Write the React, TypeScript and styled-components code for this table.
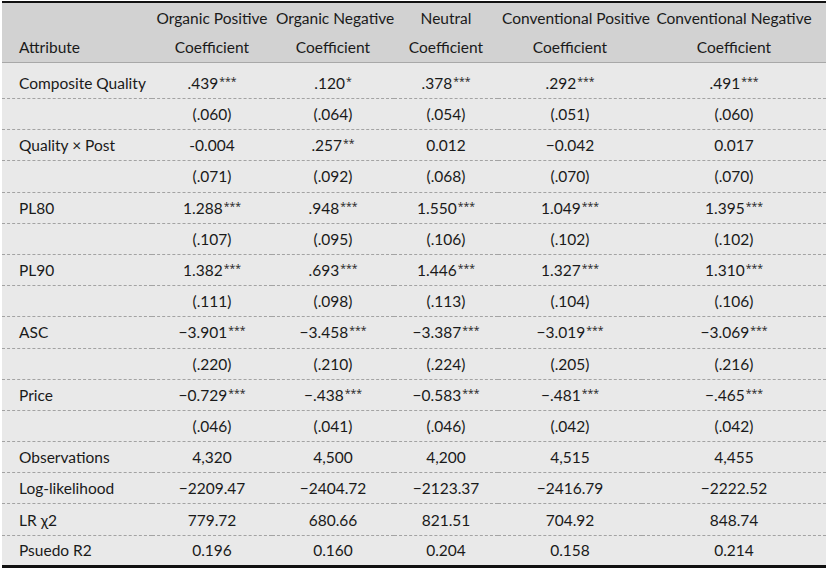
import React from "react";
import styled, {createGlobalStyle} from "styled-components";

const GlobalStyle = createGlobalStyle`
  html, body {
    margin: 0;
    padding: 0;
    background: #ffffff;
  }

  body {
    font-family: Lato, "Open Sans", "DejaVu Sans", sans-serif;
    color: #1a1a1a;
  }
`

const Page = styled.div`
  padding: 1px 5px 0 2px;
`

const Table = styled.table`
  width: 824px;
  border-collapse: collapse;
  table-layout: fixed;
  font-size: 15.5px;
  border-top: 2px solid #111;
  border-bottom: 3px solid #111;
  background: #e9e9e9;
`

const HeadRow = styled.tr`
  background: #d2d2d2;
  border-bottom: 1px solid #a8a8a8;
`

const HeadCell = styled.th<{ $left?: boolean }>`
  font-weight: 400;
  line-height: 29px;
  padding: 1px 4px 0 ${p => p.$left ? "17px" : "4px"};
  text-align: ${p => p.$left ? "left" : "center"};
  vertical-align: bottom;
  white-space: nowrap;
`

const BodyRow = styled.tr<{ $first?: boolean, $last?: boolean }>`
  height: ${p => p.$first ? "36px" : "31.2px"};
  border-bottom: ${p => p.$last ? "none" : "1px dashed #a3a3a3"};

  td {
    padding-top: ${p => p.$first ? "5px" : "0"};
  }
`

const LabelCell = styled.td`
  padding: 0 0 0 17px;
  white-space: nowrap;
`

const ValueCell = styled.td`
  text-align: center;
  padding: 0 4px;
  white-space: nowrap;
`

const Stars = styled.sup`
  font-family: "Open Sans", "DejaVu Sans", sans-serif;
  font-size: 10.5px;
  line-height: 0;
  vertical-align: 4px;
  margin-left: 1px;
`

const columns = [
    {top: "Organic Positive", width: 120},
    {top: "Organic Negative", width: 122},
    {top: "Neutral", width: 104},
    {top: "Conventional Positive", width: 144},
    {top: "Conventional Negative", width: 184},
]

type Row = { label: string, values: string[] }

const rows: Row[] = [
    {label: "Composite Quality", values: [".439***", ".120*", ".378***", ".292***", ".491***"]},
    {label: "", values: ["(.060)", "(.064)", "(.054)", "(.051)", "(.060)"]},
    {label: "Quality × Post", values: ["-0.004", ".257**", "0.012", "−0.042", "0.017"]},
    {label: "", values: ["(.071)", "(.092)", "(.068)", "(.070)", "(.070)"]},
    {label: "PL80", values: ["1.288***", ".948***", "1.550***", "1.049***", "1.395***"]},
    {label: "", values: ["(.107)", "(.095)", "(.106)", "(.102)", "(.102)"]},
    {label: "PL90", values: ["1.382***", ".693***", "1.446***", "1.327***", "1.310***"]},
    {label: "", values: ["(.111)", "(.098)", "(.113)", "(.104)", "(.106)"]},
    {label: "ASC", values: ["−3.901***", "−3.458***", "−3.387***", "−3.019***", "−3.069***"]},
    {label: "", values: ["(.220)", "(.210)", "(.224)", "(.205)", "(.216)"]},
    {label: "Price", values: ["−0.729***", "−.438***", "−0.583***", "−.481***", "−.465***"]},
    {label: "", values: ["(.046)", "(.041)", "(.046)", "(.042)", "(.042)"]},
    {label: "Observations", values: ["4,320", "4,500", "4,200", "4,515", "4,455"]},
    {label: "Log-likelihood", values: ["−2209.47", "−2404.72", "−2123.37", "−2416.79", "−2222.52"]},
    {label: "LR χ2", values: ["779.72", "680.66", "821.51", "704.92", "848.74"]},
    {label: "Psuedo R2", values: ["0.196", "0.160", "0.204", "0.158", "0.214"]},
]

const Value = ({text}: { text: string }) => {
    const m = text.match(/^(.*?)(\*+)$/)
    if (!m) return <>{text}</>
    return <>{m[1]}<Stars>{m[2]}</Stars></>
}

export default function App() {
    return <>
        <GlobalStyle/>
        <Page>
            <Table>
                <colgroup>
                    <col style={{width: 150}}/>
                    {columns.map(c => <col key={c.top} style={{width: c.width}}/>)}
                </colgroup>
                <thead>
                <HeadRow>
                    <HeadCell $left>Attribute</HeadCell>
                    {columns.map(c => <HeadCell key={c.top}>{c.top}<br/>Coefficient</HeadCell>)}
                </HeadRow>
                </thead>
                <tbody>
                {rows.map((r, i) => <BodyRow key={i} $first={i === 0} $last={i === rows.length - 1}>
                    <LabelCell>{r.label}</LabelCell>
                    {r.values.map((v, j) => <ValueCell key={j}><Value text={v}/></ValueCell>)}
                </BodyRow>)}
                </tbody>
            </Table>
        </Page>
    </>
}
